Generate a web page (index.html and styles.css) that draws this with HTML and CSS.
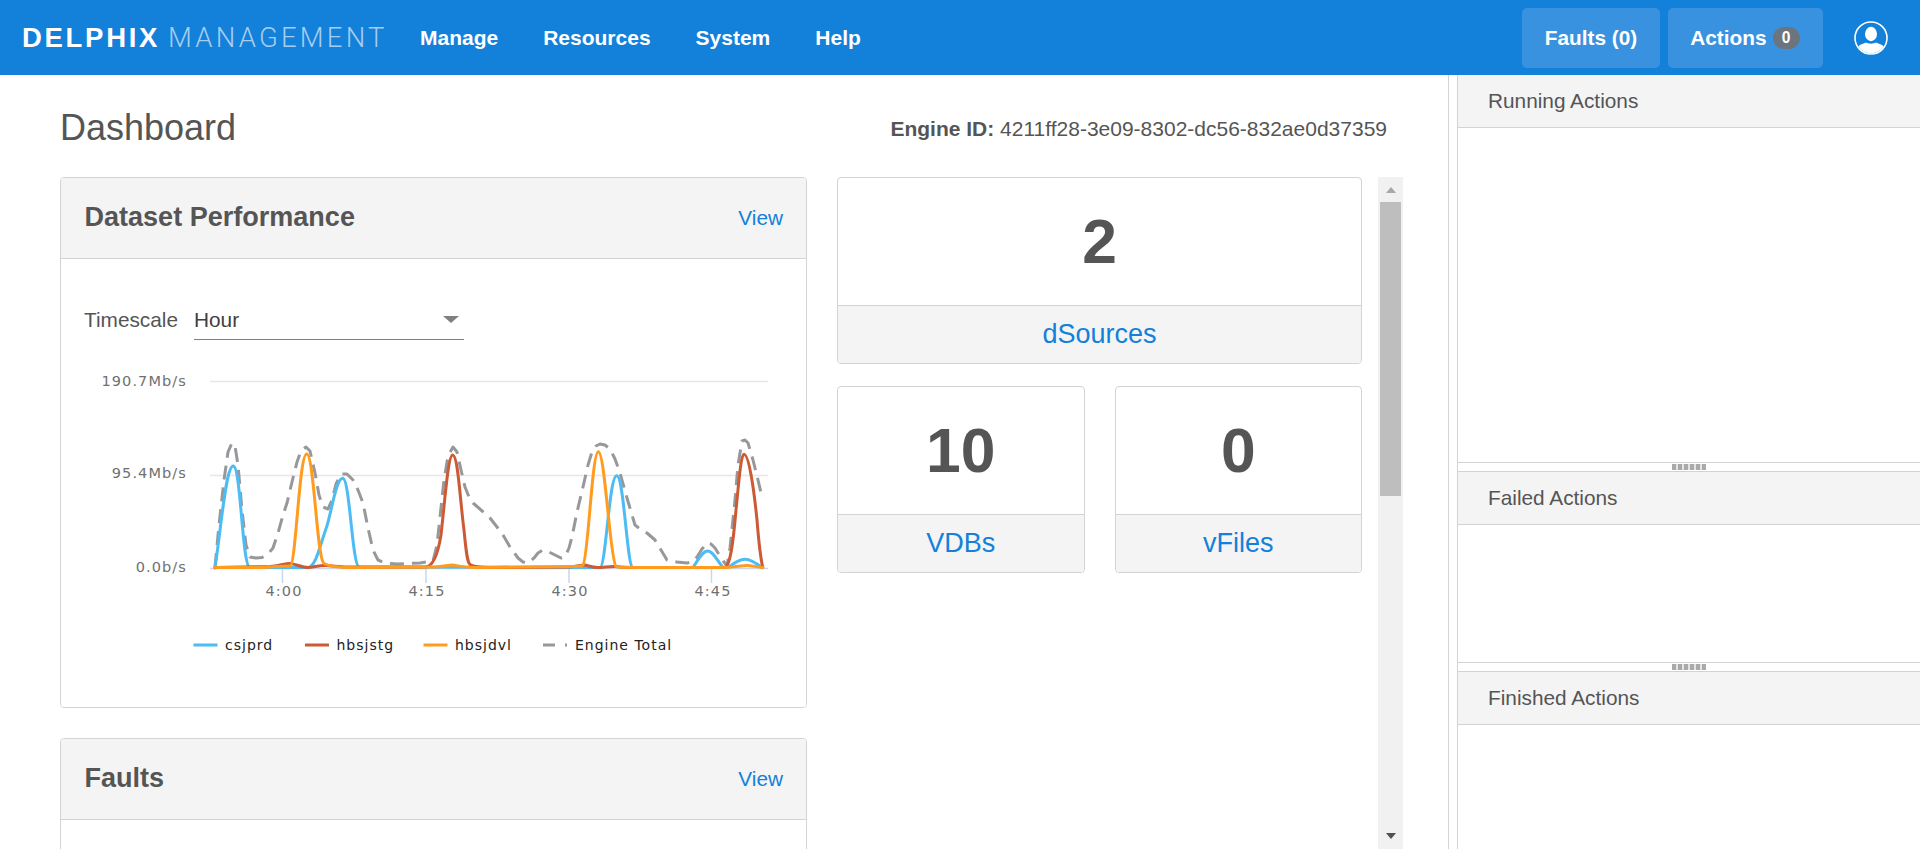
FILE: index.html
```html
<!DOCTYPE html>
<html lang="en">
<head>
<meta charset="utf-8">
<title>Delphix Management</title>
<link rel="stylesheet" href="styles.css">
</head>
<body>
<header class="topbar">
  <div class="logo"><span class="logo-bold">DELPHIX</span><span class="logo-thin">MANAGEMENT</span></div>
  <nav class="nav">
    <a>Manage</a><a>Resources</a><a>System</a><a>Help</a>
  </nav>
  <div class="top-actions">
    <button class="top-btn">Faults (0)</button>
    <button class="top-btn top-btn-actions">Actions <span class="badge">0</span></button>
    <svg class="avatar" viewBox="0 0 34 34" width="34" height="34">
      <defs><clipPath id="avatar-clip"><circle cx="17" cy="17" r="15.2"/></clipPath></defs>
      <circle cx="17" cy="17" r="16" fill="none" stroke="#fff" stroke-width="1.6"/>
      <g clip-path="url(#avatar-clip)" fill="#fff">
        <ellipse cx="17" cy="13" rx="6" ry="7.2"/>
        <path d="M3 34V27C5 23.5 9 23 12 21.5C14 23 20 23 22 21.5C25 23 29 23.5 31 27V34Z"/>
      </g>
    </svg>
  </div>
</header>

<main class="main">
  <section class="content">
    <div class="title-row">
      <h1 class="page-title">Dashboard</h1>
      <div class="engine"><b>Engine ID:</b> 4211ff28-3e09-8302-dc56-832ae0d37359</div>
    </div>
    <div class="columns">
      <div class="col-left">
        <article class="card">
          <div class="card-head"><h2>Dataset Performance</h2><a>View</a></div>
          <div class="card-body">
            <div class="timescale">
              <span class="timescale-label">Timescale</span>
              <div class="select"><span>Hour</span><i class="select-arrow"></i></div>
            </div>
            <svg class="chart" viewBox="61 360 745 347" width="745" height="347">
              <g class="grid">
                <path d="M210 381.5H768"/>
                <path d="M210 475.5H768"/>
              </g>
              <g class="axis">
                <path d="M210 568.5H768"/>
                <path d="M282.5 569V583M426 569V583M569 569V583M711.5 569V583"/>
              </g>
              <g class="ylabels">
                <text x="187" y="385.5">190.7Mb/s</text>
                <text x="187" y="478">95.4Mb/s</text>
                <text x="187" y="572">0.0b/s</text>
              </g>
              <g class="xlabels">
                <text x="284" y="596">4:00</text>
                <text x="427" y="596">4:15</text>
                <text x="570" y="596">4:30</text>
                <text x="713" y="596">4:45</text>
              </g>
              <polyline class="line line-total" points="215,567 219,525 224,480 228,452 232,443 235,446 238,465 242,510 246,545 250,557 256,558 262,557.5 268,554 273,548 278,533 283,515 287,503 292,482 297,462 301,451 306,447 310,451 315,473 319,495 323,507 328,509 332,500 336,484 341,474 347,474 353,480 358,490 363,503 368,528 373,550 378,560 385,563 398,564 420,563 433,561 437,545 440,517 444,480 448,456 453,447 457,452 461,470 465,487 469,497 473,503 481,510 490,518 497,527 503,535 510,547 518,558 523,562 528,563 534,558 538,553 543,550 549,552 555,555 561,558 565,557 569,548 572,537 577,512 583,487 588,465 592,452 596,446 600,444 605,445 610,449 615,459 620,473 627,498 635,525 641,530 647,533 655,540 661,550 667,560 677,562 687,563 692,562 697,557 702,549 707,543 711,544 715,548 721,558 727,566 730,548 735,500 738,465 742,441 745,440 748,443 753,460 758,480 762,497"/>
              <path class="line line-blue" d="M215 568C222 520 226 466 233.3 466C241 466 242 567 250 567.5L308 567.5C316 567 320 545 326.7 526.7C332 510 336 478.3 342.7 478.3C350 478.3 352 566.7 359.3 567L600 567.5C606 567 609 475.7 616.7 475.7C624 475.7 627 566 632.7 567.5L693 567.5C697 562 702 551 707.7 551C713 551 718 562 723 567.5L728 567.5C734 563 739 559.3 745 559.3C751 559.3 756 563 761.7 567.5"/>
              <path class="line line-red" d="M215 567.5L270 566.5C278 566 285 563.5 290 563.5C296 564 302 567.5 308 567.5C313 567.5 320 565 326 565.5L345 567L425 567C431 567 437 560 441 535C445 500 448 455 452.7 455C458 455 460 500 464 530C466 550 467 562 470 564.5C474 567 478 567.5 490 567.5L570 567C576 566.5 582 565 585 565C589 566 593 567.5 598 567.5C604 567.5 610 566 616 566.5C622 567.5 626 567.5 640 567.5L725 567.5C730 566 733 545 736 510C739 480 741 454 744 454.3C749 454.3 754 490 757 520C759 545 761 560 762.7 567"/>
              <path class="line line-orange" d="M215 567.5L265 567.5C275 566.5 283 566 290 566C296 566 299 454 306.7 454C314 454 317 560 324 563.5C330 567 340 567.5 350 567.5L435 567C443 567 447 565 452 565C458 565.5 462 567.5 475 567.5L575 566.5C580 566.5 582 566 583 565C588 560 592 451.7 598.3 451.7C605 451.7 610 560 616 566.5C618 567.5 625 567.5 640 567.5L725 567.5C735 567 742 565.5 747 565.5C752 565.5 756 567 763 567.5"/>
              <g class="legend-lines">
                <path class="line-blue" d="M193.5 645H217.5"/>
                <path class="line-red" d="M305 645H329"/>
                <path class="line-orange" d="M423.5 645H447.5"/>
                <path class="line-total" d="M543 645H555M565 645H567"/>
              </g>
              <g class="legend-text">
                <text x="225" y="650">csjprd</text>
                <text x="336.5" y="650">hbsjstg</text>
                <text x="455" y="650">hbsjdvl</text>
                <text x="575" y="650">Engine Total</text>
              </g>
            </svg>
          </div>
        </article>
        <article class="card">
          <div class="card-head"><h2>Faults</h2><a>View</a></div>
          <div class="card-body card-body-tall"></div>
        </article>
      </div>
      <div class="col-mid">
        <article class="stat">
          <div class="stat-value">2</div>
          <a class="stat-label">dSources</a>
        </article>
        <div class="stat-pair">
          <article class="stat">
            <div class="stat-value">10</div>
            <a class="stat-label">VDBs</a>
          </article>
          <article class="stat">
            <div class="stat-value">0</div>
            <a class="stat-label">vFiles</a>
          </article>
        </div>
      </div>
      <div class="scrollbar">
        <i class="arrow-up"></i>
        <div class="thumb"></div>
        <i class="arrow-down"></i>
      </div>
    </div>
  </section>

  <aside class="sidebar">
    <div class="panel-head">Running Actions</div>
    <div class="panel-body panel-running"></div>
    <div class="splitter"><i class="grip"></i></div>
    <div class="panel-head">Failed Actions</div>
    <div class="panel-body panel-failed"></div>
    <div class="splitter"><i class="grip"></i></div>
    <div class="panel-head">Finished Actions</div>
    <div class="panel-body panel-finished"></div>
  </aside>
</main>
</body>
</html>
```

FILE: styles.css
```css
* { box-sizing: border-box; }
html { margin: 0; height: 849px; overflow: hidden; }
body {
  margin: 0;
  font-family: "Liberation Sans", Arial, sans-serif;
  font-size: 20.8px;
  color: #555;
  background: #fff;
  overflow: hidden;
  height: 849px;
}
a { color: #1380da; text-decoration: none; }

.topbar {
  height: 75px;
  background: #1380da;
  display: flex;
  align-items: center;
  padding: 0 32px 0 22px;
  color: #fff;
}
.logo { display: flex; align-items: baseline; font-size: 27.5px; line-height: 1; width: 398px; flex: none; }
.logo-bold { font-weight: 700; letter-spacing: 2.7px; color: #fff; }
.logo-thin { font-family: Roboto, "Liberation Sans", sans-serif; font-weight: 300; letter-spacing: 3.2px; color: #a4cdf0; margin-left: 8px; }
.nav { display: flex; gap: 45px; font-weight: 700; font-size: 21px; flex: 1; }
.nav a { color: #fff; }
.top-actions { display: flex; align-items: center; gap: 8px; }
.top-btn {
  height: 60px;
  padding: 0 22.5px;
  background: #3992df;
  border: 0;
  border-radius: 5px;
  color: #fff;
  font: 700 20.8px "Liberation Sans", Arial, sans-serif;
  display: flex;
  align-items: center;
}
.top-btn-actions { padding-right: 23.5px; }
.badge {
  display: inline-flex;
  align-items: center;
  justify-content: center;
  width: 27px;
  height: 22px;
  margin-left: 6px;
  background: #6c757d;
  border-radius: 11px;
  font-size: 15.6px;
}
.avatar { margin-left: 23px; margin-top: 1px; }

.main { display: flex; height: 774px; }
.content {
  width: 1449px;
  flex: none;
  border-right: 1px solid #d3d3d3;
  padding-left: 60px;
  overflow: hidden;
  display: flex;
  flex-direction: column;
}
.title-row {
  height: 102px;
  flex: none;
  width: 1343px;
  padding: 4px 16px 0 0;
  display: flex;
  justify-content: space-between;
  align-items: center;
}
.page-title { margin: 0; font-size: 36px; font-weight: 400; line-height: 1; }
.engine { margin-top: 1px; font-size: 21px; }

.columns { display: flex; align-items: stretch; flex: 1; min-height: 0; }
.col-left { width: 747px; flex: none; display: flex; flex-direction: column; gap: 30px; }
.card { border: 1px solid #d3d3d3; border-radius: 4px; flex: none; overflow: hidden; }
.card-head {
  background: #f4f4f4;
  border-bottom: 1px solid #d3d3d3;
  display: flex;
  align-items: center;
  justify-content: space-between;
  padding: 0 23px 0 23.5px;
  box-sizing: content-box;
  height: 80px;
}
.card-head h2 { margin: 0; font-size: 27.04px; font-weight: 700; line-height: 1; }
.card-body { background: #fff; padding-top: 41px; }
.card-body-tall { height: 200px; }
.timescale { display: flex; align-items: center; height: 40px; padding-left: 23px; }
.timescale-label { width: 110px; flex: none; }
.select {
  width: 270px;
  height: 40px;
  border-bottom: 1px solid #808080;
  display: flex;
  align-items: center;
  justify-content: space-between;
  padding: 0 5px 0 0;
  color: #404040;
}
.select-arrow { width: 0; height: 0; border-left: 8.5px solid transparent; border-right: 8.5px solid transparent; border-top: 7px solid #808080; }
.chart { display: block; margin-top: 20px; }
.grid path { stroke: #e6e6e6; stroke-width: 1.5; fill: none; }
.axis path { stroke: #ccd6eb; stroke-width: 1.5; fill: none; }
.ylabels text, .xlabels text { font-family: "DejaVu Sans", sans-serif; font-size: 14.5px; letter-spacing: 1.1px; fill: #707070; }
.ylabels text { text-anchor: end; }
.xlabels text { text-anchor: middle; }
.line { fill: none; stroke-width: 3; stroke-linejoin: round; stroke-linecap: round; }
.line-blue { stroke: #4cbcf4; }
.line-red { stroke: #cc5a34; }
.line-orange { stroke: #ff9c20; }
.line-total { stroke: #98989c; }
polyline.line-total { stroke-dasharray: 14 8; stroke-linecap: butt; }
.legend-lines path { fill: none; stroke-width: 3; }
.legend-text text { font-family: "DejaVu Sans", sans-serif; font-size: 14px; letter-spacing: 1px; fill: #222; }

.col-mid { width: 525px; margin-left: 30px; flex: none; display: flex; flex-direction: column; gap: 22px; }
.stat { border: 1px solid #d3d3d3; border-radius: 4px; overflow: hidden; height: 187px; display: flex; flex-direction: column; flex: 1; }
.col-mid > .stat { flex: none; }
.stat-pair { display: flex; gap: 30px; }
.stat-value { height: 127px; flex: none; display: flex; align-items: center; justify-content: center; font-size: 62.4px; font-weight: 700; border-bottom: 1px solid #d3d3d3; box-sizing: content-box; }
.stat-label { flex: 1; display: flex; align-items: center; justify-content: center; background: #f4f4f4; font-size: 27.04px; }

.scrollbar { width: 25px; margin-left: 16px; flex: none; background: #f1f1f1; display: flex; flex-direction: column; align-items: center; padding-top: 10px; }
.arrow-up { width: 0; height: 0; border-left: 5.5px solid transparent; border-right: 5.5px solid transparent; border-bottom: 6px solid #a8a8a8; flex: none; }
.thumb { width: 21px; height: 294px; margin-top: 9px; background: #bebebe; flex: none; }
.arrow-down { width: 0; height: 0; margin-top: auto; margin-bottom: 10px; border-left: 5.5px solid transparent; border-right: 5.5px solid transparent; border-top: 6px solid #505050; flex: none; }

.sidebar { flex: 1; margin-left: 8px; border-left: 1px solid #d3d3d3; min-width: 0; display: flex; flex-direction: column; }
.panel-head { height: 53px; flex: none; background: #f4f4f4; border-bottom: 1px solid #d3d3d3; padding-left: 30px; display: flex; align-items: center; }
.panel-body { flex: none; }
.panel-running { height: 334px; }
.panel-failed { height: 137px; }
.panel-finished { flex: 1; }
.splitter { height: 10px; flex: none; border-top: 1px solid #d3d3d3; border-bottom: 1px solid #d3d3d3; display: flex; justify-content: center; align-items: center; }
.grip { width: 34px; height: 6px; background: repeating-linear-gradient(90deg, #aaa 0 4px, #e4e4e4 4px 6px); }
```
